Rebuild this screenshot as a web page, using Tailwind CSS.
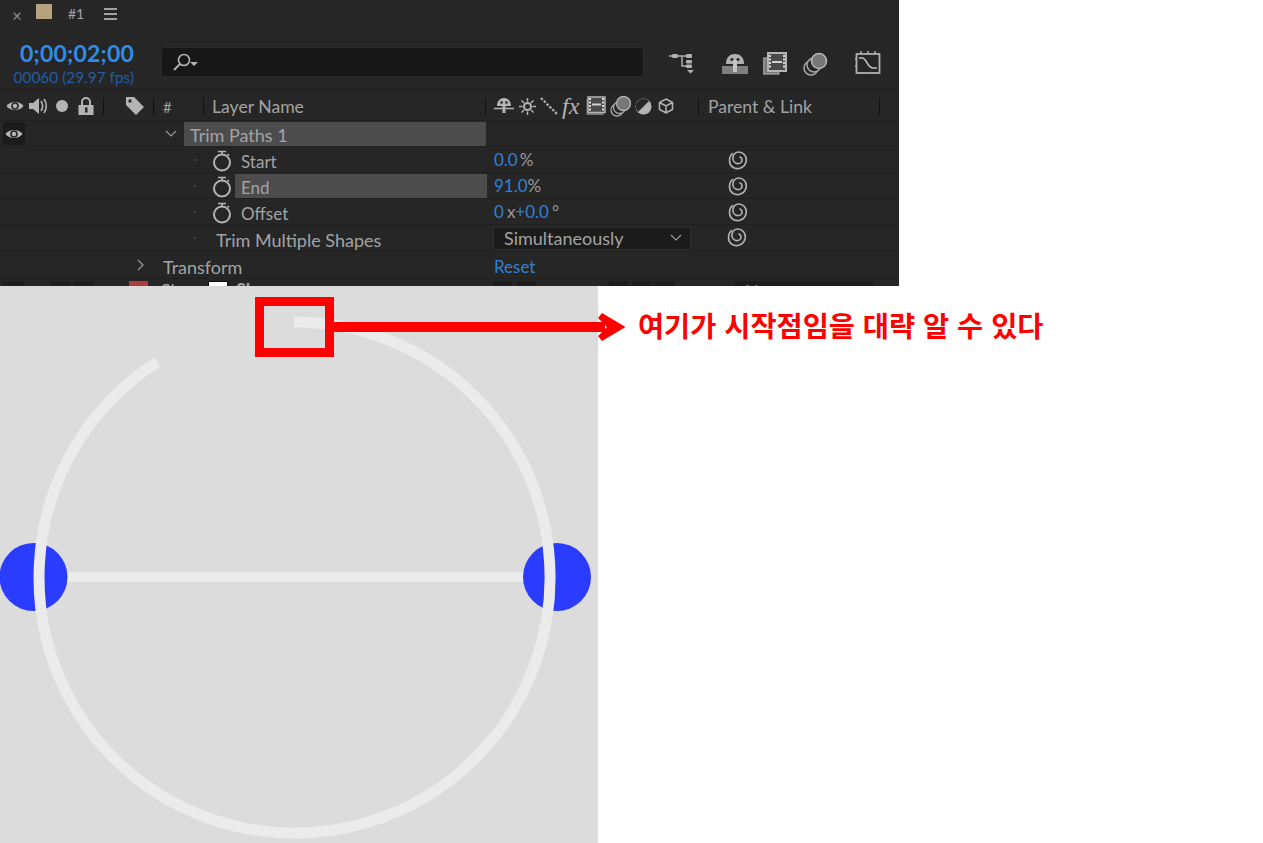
<!DOCTYPE html>
<html lang="ko">
  <head>
    <meta charset="UTF-8" />
    <title>Trim Paths</title>
    <script src="https://cdn.jsdelivr.net/npm/@tailwindcss/browser@4"></script>
  </head>
  <body class="bg-white">
    <svg class="hidden">
      <symbol id="watch" viewBox="0 0 20 22">
        <circle cx="10" cy="12.5" r="8" fill="none" stroke="#b4b4b4" stroke-width="2" />
        <path d="M6 1.5h8M10 1.5v3M15.5 4l1.5 1.5" fill="none" stroke="#b4b4b4" stroke-width="1.6" />
      </symbol>
      <symbol id="spiral" viewBox="0 0 20 20">
        <path d="M4.500 3.500C.5 7 .5 14 4.500 17 9.500 20.500 16.500 18 18 12 19.500 6 15 2 10.500 2 6.500 2 4.500 6 5 9.500 5.500 13 10 15 13 12.500 14.500 11 14.500 8 12 7" fill="none" stroke="#b4b4b4" stroke-width="1.600" stroke-linecap="round" />
      </symbol>
      <symbol id="eye" viewBox="0 0 18 12">
        <path d="M0.500 6C4 .8 14 .8 17.500 6 14 11.200 4 11.200 .5 6Z" fill="#b4b4b4" />
        <circle cx="9" cy="6" r="3.800" fill="#262626" />
        <circle cx="9" cy="6" r="2.200" fill="#b4b4b4" />
      </symbol>
    </svg>

    <div class="relative w-[1263px] h-[843px] overflow-hidden font-['Lato',sans-serif]">
      <!-- timeline panel -->
      <div class="w-[899px] h-[286px] bg-[#262626] text-[#a3a3a3] flex flex-col overflow-hidden">
        <!-- tab -->
        <div class="h-[29px] shrink-0 flex items-center text-[14px]">
          <span class="ml-[12px] w-[10px] text-[#8f8f8f] text-[17px] leading-none mt-[2px]">×</span>
          <span class="ml-[14px] w-[16px] h-[15px] bg-[#b5a27f] -mt-[7px]"></span>
          <span class="ml-[16px] w-[36px] -mt-[3px]">#1</span>
          <svg class="w-[13px] h-[12px] -mt-[2px]" viewBox="0 0 13 12"><path d="M0 1h13M0 6h13M0 11h13" stroke="#a0a0a0" stroke-width="1.800" /></svg>
        </div>

        <!-- timecode, search, switches -->
        <div class="h-[61px] shrink-0 flex border-b border-[#202020]">
          <div class="w-[161px] shrink-0 flex flex-col items-end pr-[27px] pt-[8px]">
            <span class="text-[23px] leading-[32px] font-bold text-[#2f8ce8] tracking-[0.2px]">0;00;02;00</span>
            <span class="text-[15.4px] leading-[16px] text-[#1f5da6] whitespace-nowrap">00060 (29.97 fps)</span>
          </div>
          <div class="w-[483px] h-[30px] mt-[18px] rounded-[3px] bg-[#171717] border border-[#2c2c2c] flex items-center pl-[10px]">
            <svg class="w-[28px] h-[20px]" viewBox="0 0 28 20">
              <circle cx="12" cy="8" r="5.500" fill="none" stroke="#b4b4b4" stroke-width="1.600" />
              <path d="M8 12l-6 6" stroke="#b4b4b4" stroke-width="1.800" />
              <path d="M18 10h8l-4 4Z" fill="#b4b4b4" />
            </svg>
          </div>
          <div class="flex items-start pt-[23px]">
            <svg class="ml-[24px] w-[28px] h-[22px]" viewBox="0 0 28 22">
              <path d="M1 4h8M9 4h14M14 4v10h9" stroke="#b0b0b0" stroke-width="1.500" fill="none" />
              <rect x="4" y="2" width="6" height="4" rx="1" fill="#b0b0b0" />
              <rect x="18" y="2" width="6" height="4" rx="1" fill="#b0b0b0" />
              <rect x="18" y="8" width="6" height="3.500" rx="1" fill="#b0b0b0" />
              <rect x="18" y="12.500" width="6" height="3.500" rx="1" fill="#b0b0b0" />
              <path d="M19 18h7l-3.500 3.500Z" fill="#b0b0b0" />
            </svg>
            <svg class="ml-[26px] w-[26px] h-[22px]" viewBox="0 0 26 22">
              <path d="M4 12C4 5 8 2 13 2s9 3 9 10Z" fill="#b0b0b0" />
              <circle cx="10" cy="7.500" r="1.600" fill="#262626" />
              <circle cx="16" cy="7.500" r="1.600" fill="#262626" />
              <rect x="0" y="14" width="26" height="8" fill="#7f7f7f" />
              <rect x="11" y="8" width="4" height="12" fill="#c4c4c4" />
            </svg>
            <svg class="ml-[15px] w-[24px] h-[23px]" viewBox="0 0 24 23">
              <rect x="0.800" y="6" width="15" height="16" fill="#777" stroke="#aaa" stroke-width="1.200" />
              <rect x="5" y="1" width="18" height="18" fill="#4a4a4a" stroke="#b4b4b4" stroke-width="2" />
              <path d="M9 10h10" stroke="#d0d0d0" stroke-width="2" />
              <path d="M7 3v14M21 3v14" stroke="#d8d8d8" stroke-width="2" stroke-dasharray="2 1.500" />
            </svg>
            <svg class="ml-[16px] w-[25px] h-[24px]" viewBox="0 0 25 24">
              <circle cx="8" cy="16" r="7" fill="none" stroke="#a8a8a8" stroke-width="1.500" />
              <circle cx="11" cy="13" r="7" fill="#262626" stroke="#a8a8a8" stroke-width="1.500" />
              <circle cx="16" cy="9" r="7.500" fill="#777" stroke="#b4b4b4" stroke-width="1.600" />
            </svg>
            <svg class="ml-[27px] w-[26px] h-[24px] -mt-[2px]" viewBox="0 0 26 24">
              <rect x="1.500" y="4" width="23" height="19" fill="none" stroke="#b0b0b0" stroke-width="1.800" />
              <path d="M6 1v3M13 1v3M20 1v3M0 9h2M0 16h2" stroke="#b0b0b0" stroke-width="1.500" />
              <path d="M4 8h3c5 0 5 10 11 10h4" fill="none" stroke="#c0c0c0" stroke-width="1.600" />
            </svg>
          </div>
        </div>

        <!-- column header -->
        <div class="h-[31px] shrink-0 flex items-center text-[17.6px] border-b border-[#202020]">
          <svg class="ml-[6px] w-[18px] h-[12px] mt-[2px]"><use href="#eye" /></svg>
          <svg class="ml-[5px] w-[19px] h-[18px] mt-[2px]" viewBox="0 0 19 18">
            <path d="M0 6h4l6-5v16l-6-5H0Z" fill="#b4b4b4" />
            <path d="M12 4c2 3 2 7 0 10M15 2c3 4 3 10 0 14" fill="none" stroke="#b4b4b4" stroke-width="1.600" />
          </svg>
          <span class="ml-[8px] w-[12px] h-[12px] rounded-full bg-[#b4b4b4] mt-[2px]"></span>
          <svg class="ml-[10px] w-[16px] h-[18px] mt-[2px]" viewBox="0 0 16 18">
            <path d="M4 8V5a4 4 0 0 1 8 0v3" fill="none" stroke="#b4b4b4" stroke-width="2" />
            <rect x="0.500" y="8" width="15" height="10" fill="#b4b4b4" />
            <rect x="7" y="10.500" width="2.500" height="5" fill="#262626" />
          </svg>
          <span class="ml-[9px] w-px h-[17px] bg-[#111] mt-[2px]"></span>
          <svg class="ml-[21px] w-[20px] h-[20px] mt-[2px]" viewBox="0 0 20 20">
            <path d="M1 1h8l10 10-8 8L1 9Z" fill="#b4b4b4" />
            <circle cx="5" cy="5" r="1.700" fill="#262626" />
          </svg>
          <span class="ml-[8px] w-px h-[17px] bg-[#111] mt-[2px]"></span>
          <span class="ml-[9px] w-[40px] text-[15px] mt-[4px]">#</span>
          <span class="w-px h-[17px] bg-[#111] mt-[2px]"></span>
          <span class="ml-[8px] w-[273px] mt-[4px]">Layer Name</span>
          <span class="w-px h-[17px] bg-[#111] mt-[2px]"></span>
          <span class="ml-[8px] flex items-center mt-[2px]">
            <svg class="w-[20px] h-[18px]" viewBox="0 0 20 18">
              <path d="M3 9C3 4 6 1 10 1s7 3 7 8Z" fill="#b4b4b4" />
              <circle cx="7.500" cy="5.500" r="1.300" fill="#262626" />
              <circle cx="12.500" cy="5.500" r="1.300" fill="#262626" />
              <path d="M0 11.500h20" stroke="#b4b4b4" stroke-width="1.500" />
              <path d="M10 7v9" stroke="#b4b4b4" stroke-width="3" />
            </svg>
            <svg class="ml-[5px] w-[17px] h-[17px]" viewBox="0 0 17 17">
              <circle cx="8.500" cy="8.500" r="3.500" fill="none" stroke="#b4b4b4" stroke-width="2" />
              <path d="M8.500 0v3.500M8.500 13.500V17M0 8.500h3.500M13.500 8.500H17M2.500 2.500l2.500 2.500M12 12l2.500 2.500M2.500 14.500L5 12M12 5l2.500-2.500" stroke="#b4b4b4" stroke-width="1.500" />
            </svg>
            <svg class="ml-[4px] w-[18px] h-[18px]" viewBox="0 0 18 18">
              <path d="M1 1l16 16" stroke="#b4b4b4" stroke-width="2.200" stroke-dasharray="2.500 1.500" />
            </svg>
            <span class="ml-[4px] w-[20px] text-[24px] leading-none italic font-['Liberation_Serif',serif] text-[#b4b4b4]">fx</span>
            <svg class="ml-[4px] w-[20px] h-[20px]" viewBox="0 0 20 20">
              <rect x="0.500" y="3" width="17" height="16" fill="#777" />
              <rect x="2" y="1" width="17" height="15.500" fill="#4a4a4a" stroke="#b4b4b4" stroke-width="1.500" />
              <path d="M6 8.500h9" stroke="#d0d0d0" stroke-width="2" />
              <path d="M4 2v14M17 2v14" stroke="#d8d8d8" stroke-width="2" stroke-dasharray="2 1.500" />
            </svg>
            <svg class="ml-[4px] w-[21px] h-[21px]" viewBox="0 0 21 21">
              <circle cx="7" cy="14" r="6" fill="none" stroke="#a8a8a8" stroke-width="1.300" />
              <circle cx="9.500" cy="11.500" r="6" fill="#262626" stroke="#a8a8a8" stroke-width="1.300" />
              <circle cx="13.500" cy="7.500" r="7" fill="#777" stroke="#b4b4b4" stroke-width="1.300" />
            </svg>
            <svg class="ml-[4px] w-[17px] h-[17px]" viewBox="0 0 17 17">
              <circle cx="8.500" cy="8.500" r="8" fill="#b4b4b4" />
              <path d="M3 14L14 3A8 8 0 0 1 14 14 8 8 0 0 1 3 14Z" fill="#262626" transform="rotate(180 8.500 8.500)" />
            </svg>
            <svg class="ml-[6px] w-[16px] h-[16px]" viewBox="0 0 16 16">
              <path d="M8 1l6.500 3.500v7L8 15l-6.500-3.500v-7ZM1.500 4.500L8 8l6.500-3.500M8 8v7" fill="none" stroke="#b4b4b4" stroke-width="1.500" />
            </svg>
          </span>
          <span class="ml-[24px] w-px h-[17px] bg-[#111] mt-[2px]"></span>
          <span class="ml-[9px] w-[171px] mt-[4px]">Parent &amp; Link</span>
          <span class="w-px h-[17px] bg-[#111] mt-[2px]"></span>
        </div>

        <!-- property rows -->
        <div class="h-[26px] shrink-0 flex items-center border-b border-[#202020] text-[18px]">
          <span class="ml-[3px] w-[22px] h-[23px] bg-[#1b1b1b] flex items-center justify-center">
            <svg class="w-[18px] h-[12px]"><use href="#eye" /></svg>
          </span>
          <svg class="ml-[140px] w-[12px] h-[8px]" viewBox="0 0 12 8"><path d="M1 1l5 5 5-5" fill="none" stroke="#999" stroke-width="1.200" /></svg>
          <span class="ml-[7px] w-[302px] h-[24px] bg-[#4c4c4c] pl-[6px] leading-[26px]">Trim Paths 1</span>
        </div>

        <div class="h-[26px] shrink-0 flex items-center border-b border-[#202020] text-[17px]">
          <span class="ml-[194px] w-[2px] h-[2px] bg-[#444]"></span>
          <svg class="ml-[16px] w-[20px] h-[22px] mt-[2px]"><use href="#watch" /></svg>
          <span class="ml-[9px] w-[253px] mt-[4px]">Start</span>
          <span class="w-[234px] text-[#2f80d8]">0.0<span class="ml-[2px] text-[#9a9a9a]">%</span></span>
          <svg class="w-[20px] h-[20px]"><use href="#spiral" /></svg>
        </div>

        <div class="h-[26px] shrink-0 flex items-center border-b border-[#202020] text-[17px]">
          <span class="ml-[194px] w-[2px] h-[2px] bg-[#444]"></span>
          <svg class="ml-[16px] w-[20px] h-[22px] mt-[2px]"><use href="#watch" /></svg>
          <span class="ml-[3px] w-[252px] h-[24px] bg-[#4c4c4c] pl-[6px] leading-[28px]">End</span>
          <span class="ml-[7px] w-[234px] text-[#2f80d8] mt-[1px]">91.0<span class="text-[#9a9a9a]">%</span></span>
          <svg class="w-[20px] h-[20px]"><use href="#spiral" /></svg>
        </div>

        <div class="h-[26px] shrink-0 flex items-center border-b border-[#202020] text-[17px]">
          <span class="ml-[194px] w-[2px] h-[2px] bg-[#444]"></span>
          <svg class="ml-[16px] w-[20px] h-[22px] mt-[2px]"><use href="#watch" /></svg>
          <span class="ml-[9px] w-[253px] mt-[4px]">Offset</span>
          <span class="w-[234px] text-[#2f80d8]">0<span class="ml-[3px] text-[#9a9a9a]">x</span>+0.0<span class="ml-[3px] text-[#9a9a9a]">°</span></span>
          <svg class="w-[20px] h-[20px]"><use href="#spiral" /></svg>
        </div>

        <div class="h-[27px] shrink-0 flex items-center border-b border-[#202020] text-[18px]">
          <span class="ml-[194px] w-[2px] h-[2px] bg-[#444]"></span>
          <span class="ml-[20px] w-[277px] whitespace-nowrap mt-[4px]">Trim Multiple Shapes</span>
          <span class="w-[198px] h-[23px] bg-[#1b1b1b] border border-[#2e2e2e] pl-[10px] flex items-center justify-between pr-[8px]">
            Simultaneously
            <svg class="w-[12px] h-[8px]" viewBox="0 0 12 8"><path d="M1 1l5 5 5-5" fill="none" stroke="#999" stroke-width="1.200" /></svg>
          </span>
          <svg class="ml-[36px] w-[20px] h-[20px] -mt-[2px]"><use href="#spiral" /></svg>
        </div>

        <div class="h-[27px] shrink-0 flex items-center border-b border-[#202020] text-[18px]">
          <svg class="ml-[137px] w-[8px] h-[12px]" viewBox="0 0 8 12"><path d="M1 1l5 5-5 5" fill="none" stroke="#999" stroke-width="1.200" /></svg>
          <span class="ml-[18px] w-[331px] mt-[4px]">Transform</span>
          <span class="text-[#2f80d8] text-[17px] mt-[3px]">Reset</span>
        </div>

        <!-- next layer, cut off by the crop -->
        <div class="h-[7px] shrink-0 flex items-start overflow-hidden pt-[2px] text-[18px] leading-[26px]">
          <span class="ml-[3px] w-[21px] h-[7px] bg-[#1e1e1e]"></span>
          <span class="ml-[26px] w-[21px] h-[7px] bg-[#1e1e1e]"></span>
          <span class="ml-[2px] w-[21px] h-[7px] bg-[#1e1e1e]"></span>
          <span class="ml-[35px] w-[19px] h-[7px] bg-[#b03a3a]"></span>
          <span class="ml-[13px] w-[47px] text-[#a3a3a3] -mt-[4px]">Sha</span>
          <span class="w-[20px] h-[7px] bg-white border-t border-x border-[#111]"></span>
          <span class="ml-[8px] w-[257px] font-bold text-[#a3a3a3] -mt-[4px] whitespace-nowrap">Shape</span>
          <span class="w-[19px] h-[7px] bg-[#1e1e1e]"></span>
          <span class="ml-[5px] w-[19px] h-[7px] bg-[#1e1e1e]"></span>
          <span class="ml-[73px] w-[19px] h-[7px] bg-[#1e1e1e]"></span>
          <span class="ml-[4px] w-[19px] h-[7px] bg-[#1e1e1e]"></span>
          <span class="ml-[4px] w-[19px] h-[7px] bg-[#1e1e1e]"></span>
          <span class="ml-[61px] w-[138px] h-[7px] bg-[#1e1e1e] pl-[10px] text-[#a3a3a3] leading-[20px]">None</span>
        </div>
      </div>

      <!-- preview -->
      <div class="w-[598px] h-[557px] bg-[#dcdcdc]">
        <svg class="block w-full h-full" viewBox="0 286 598 557">
          <path d="M40 577H549" stroke="#ebebeb" stroke-width="10" />
          <circle cx="33.500" cy="577" r="34" fill="#2a3cff" />
          <circle cx="557" cy="577" r="34" fill="#2a3cff" />
          <path d="M294 322A255.500 255.500 0 1 1 157.600 361.800" fill="none" stroke="#ebebeb" stroke-width="11" />
        </svg>
      </div>

      <!-- annotation -->
      <div class="absolute left-[255px] top-[297px] w-[79px] h-[60px] border-[9px] border-[#ff0000]"></div>
      <svg class="absolute left-[334px] top-[310px] w-[292px] h-[34px]" viewBox="334 310 292 34">
        <path d="M334 322H605V332H334Z" fill="#ff0000" />
        <path d="M598 318L602 313 625.500 327 602 341 598 336 607 327Z" fill="#ff0000" />
      </svg>
      <span class="absolute left-[638px] top-[305px] text-[28.4px] leading-[40px] font-bold text-[#ff0000] whitespace-nowrap font-['Noto_Sans_CJK_KR',sans-serif]">여기가 시작점임을 대략 알 수 있다</span>
    </div>
  </body>
</html>
